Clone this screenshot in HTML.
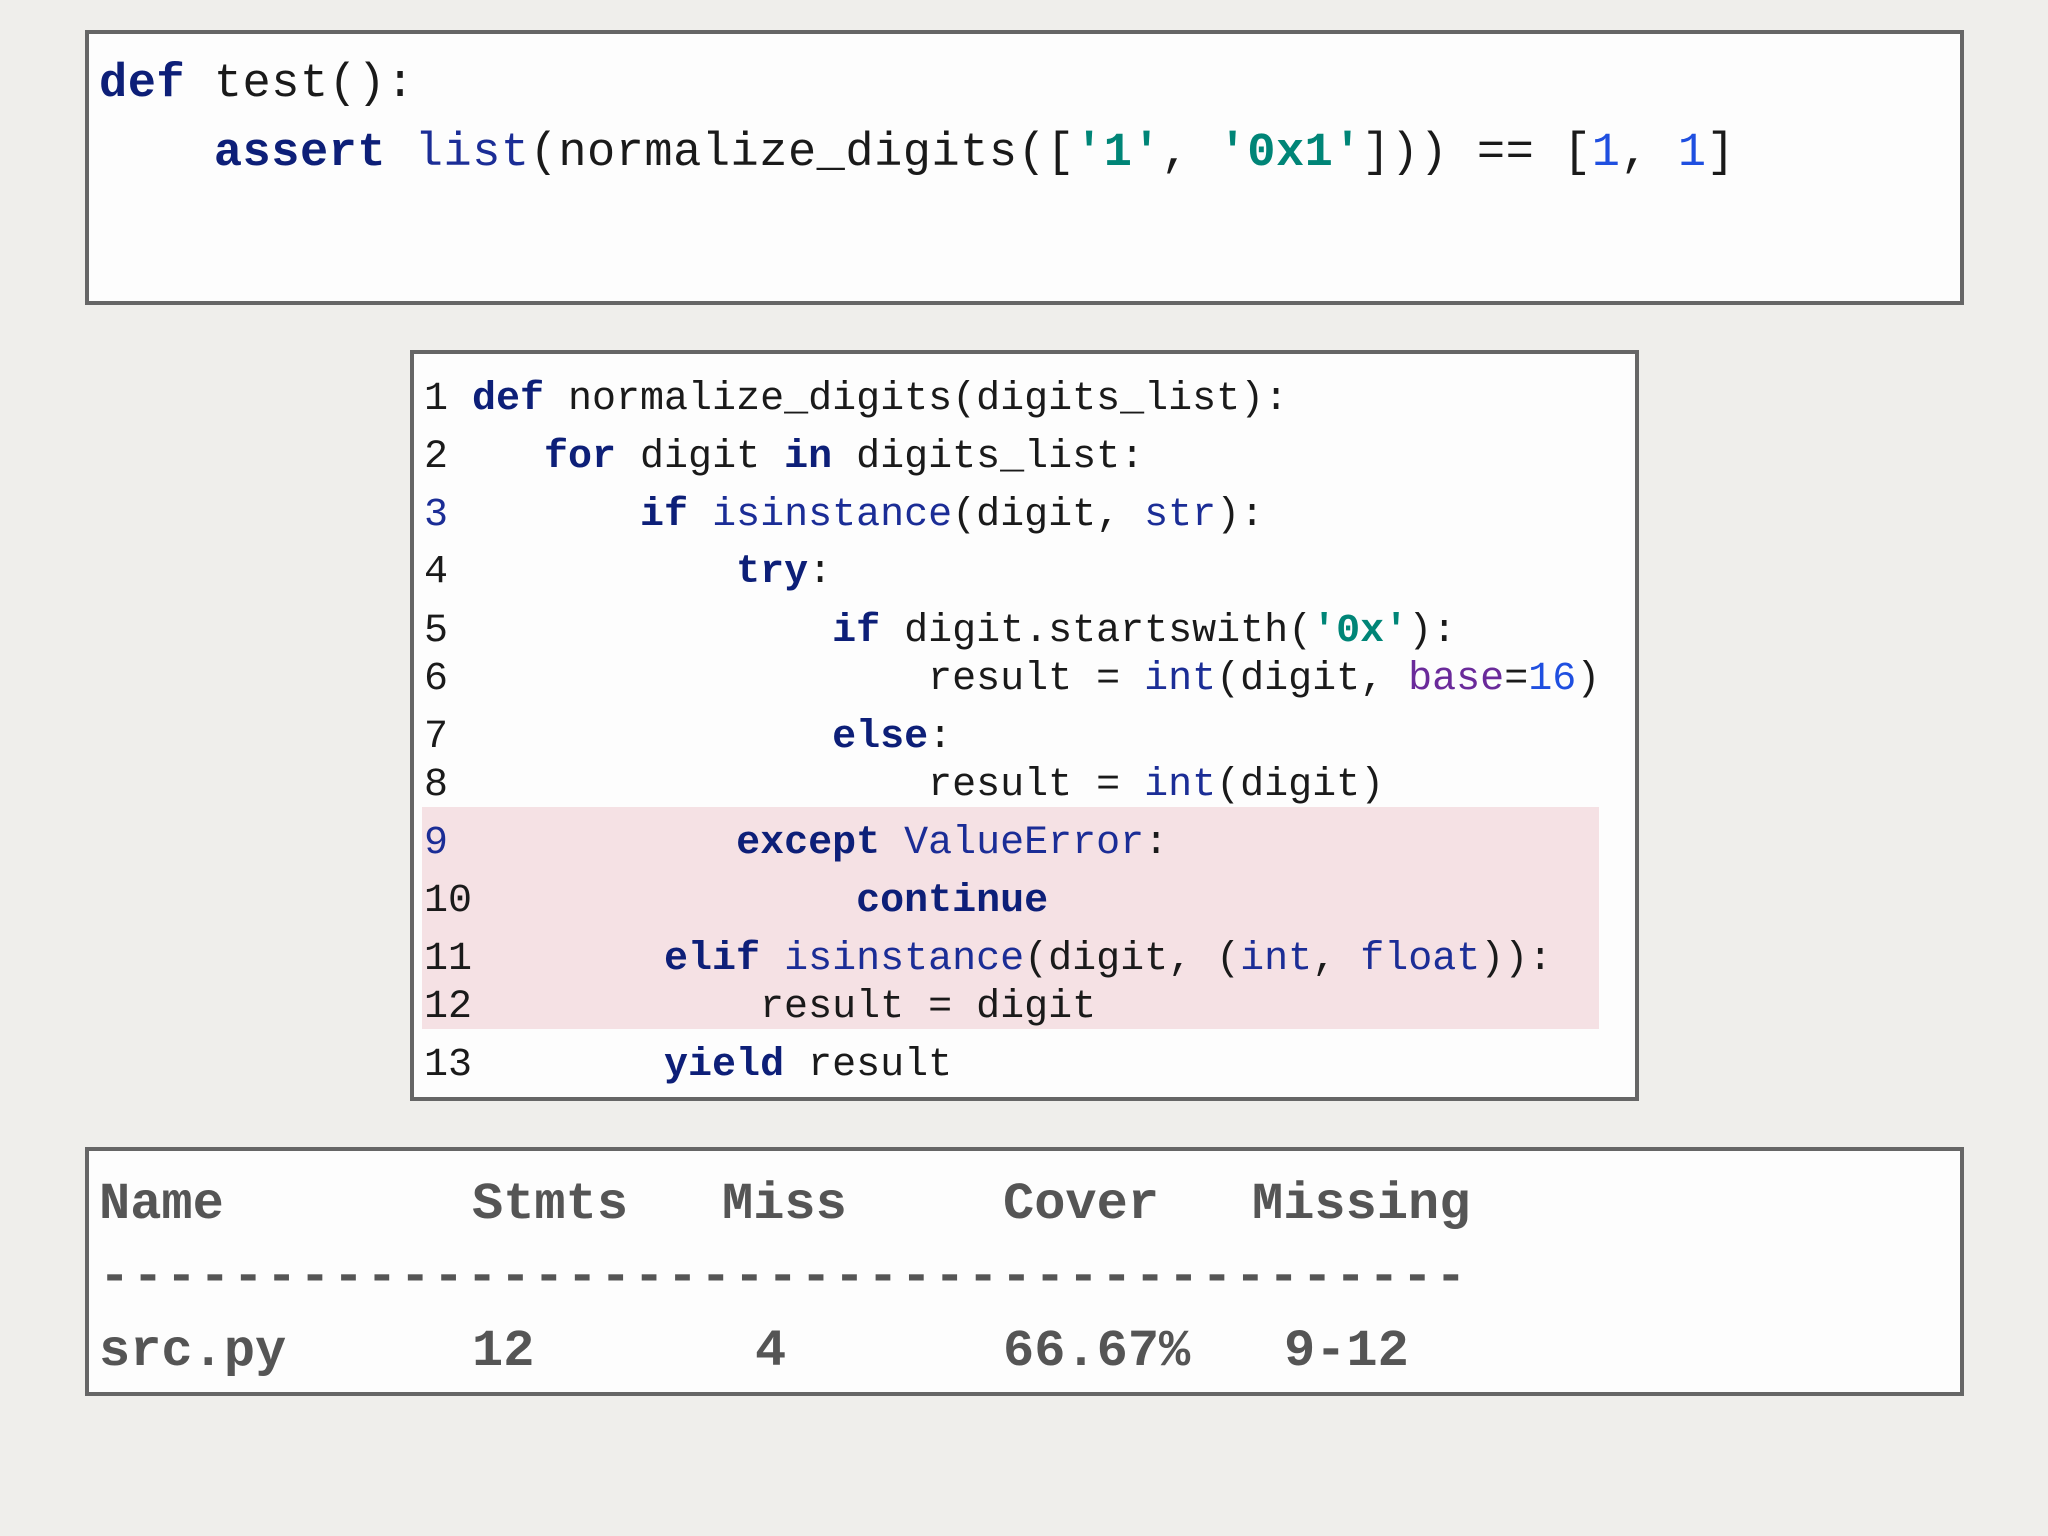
<!DOCTYPE html>
<html><head><meta charset="utf-8"><style>
body{margin:0;width:2048px;height:1536px;background:#efeeeb;position:relative;overflow:hidden;font-family:"Liberation Mono",monospace;}
.box{position:absolute;background:#fdfdfd;border:4px solid #666;box-sizing:border-box;}
.t{position:absolute;white-space:pre;color:#1a1a1a;}
.k{color:#0d1f78;font-weight:bold}
.b{color:#1b2d96}
.s{color:#008577;font-weight:bold}
.n{color:#1f4fe0}
.p{color:#6a2a9a}
.c1 .t{font-size:47px;line-height:60px;letter-spacing:0.5px}
.c2 .t{font-size:40px;line-height:50px}
.c3 .t{font-size:52px;line-height:64px;font-weight:bold;color:#555}
</style></head><body>
<div class="box" style="left:85px;top:30px;width:1879px;height:275px"></div>
<div class="c1">
<div class="t" style="left:99px;top:55px"><span class="k">def</span> test():</div>
<div class="t" style="left:99px;top:124px">    <span class="k">assert</span> <span class="b">list</span>(normalize_digits([<span class="s">'1'</span>, <span class="s">'0x1'</span>])) == [<span class="n">1</span>, <span class="n">1</span>]</div>
</div>

<div class="box" style="left:410px;top:350px;width:1229px;height:751px"></div>
<div style="position:absolute;left:422px;top:807px;width:1177px;height:222px;background:#f5e1e4"></div>
<div class="c2">
<div class="t" style="left:424px;top:375px">1 <span class="k">def</span> normalize_digits(digits_list):</div>
<div class="t" style="left:424px;top:433px">2    <span class="k">for</span> digit <span class="k">in</span> digits_list:</div>
<div class="t" style="left:424px;top:491px"><span class="b">3</span>        <span class="k">if</span> <span class="b">isinstance</span>(digit, <span class="b">str</span>):</div>
<div class="t" style="left:424px;top:548px">4            <span class="k">try</span>:</div>
<div class="t" style="left:424px;top:607px">5                <span class="k">if</span> digit.startswith(<span class="s">'0x'</span>):</div>
<div class="t" style="left:424px;top:655px">6                    result = <span class="b">int</span>(digit, <span class="p">base</span>=<span class="n">16</span>)</div>
<div class="t" style="left:424px;top:713px">7                <span class="k">else</span>:</div>
<div class="t" style="left:424px;top:761px">8                    result = <span class="b">int</span>(digit)</div>
<div class="t" style="left:424px;top:819px"><span class="b">9</span>            <span class="k">except</span> <span class="b">ValueError</span>:</div>
<div class="t" style="left:424px;top:877px">10                <span class="k">continue</span></div>
<div class="t" style="left:424px;top:935px">11        <span class="k">elif</span> <span class="b">isinstance</span>(digit, (<span class="b">int</span>, <span class="b">float</span>)):</div>
<div class="t" style="left:424px;top:983px">12            result = digit</div>
<div class="t" style="left:424px;top:1041px">13        <span class="k">yield</span> result</div>
</div>

<div class="box" style="left:85px;top:1147px;width:1879px;height:249px"></div>
<div class="c3">
<div class="t" style="left:99px;top:1173px">Name</div>
<div class="t" style="left:472px;top:1173px">Stmts</div>
<div class="t" style="left:722px;top:1173px">Miss</div>
<div class="t" style="left:1003px;top:1173px">Cover</div>
<div class="t" style="left:1252px;top:1173px">Missing</div>
<div class="t" style="left:99px;top:1246px;letter-spacing:2.2px">-----------------------------------------</div>
<div class="t" style="left:99px;top:1320px">src.py</div>
<div class="t" style="left:472px;top:1320px">12</div>
<div class="t" style="left:755px;top:1320px">4</div>
<div class="t" style="left:1003px;top:1320px">66.67%</div>
<div class="t" style="left:1284px;top:1320px">9-12</div>
</div>
</body></html>
